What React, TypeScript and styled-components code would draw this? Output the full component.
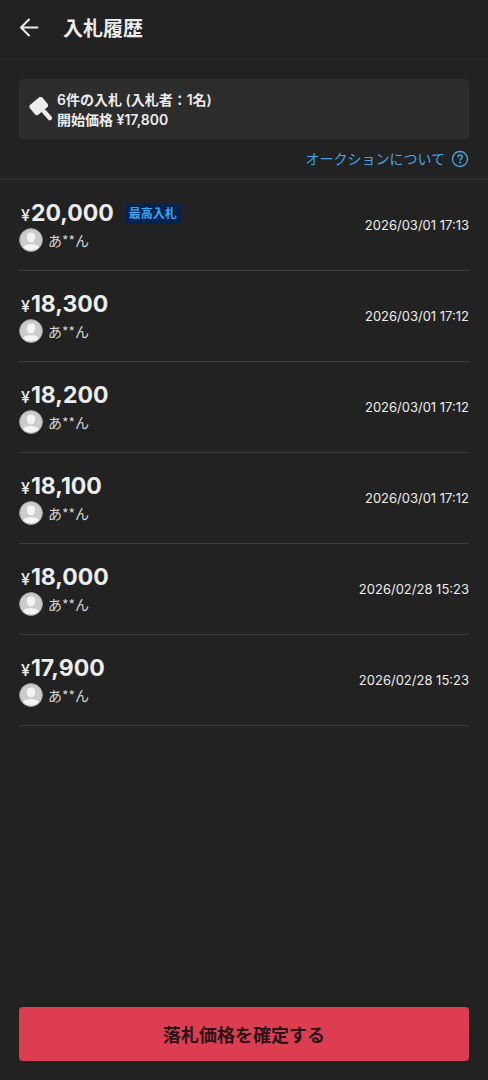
import React from 'react';
import styled, { createGlobalStyle } from 'styled-components';

const GlobalStyle = createGlobalStyle`
  *, *::before, *::after { box-sizing: border-box; }
  body {
    margin: 0;
    background: #222222;
    color: #ececec;
    font-family: Inter, "Noto Sans CJK JP", sans-serif;
  }
`;

const Page = styled.div`
  min-height: 100vh;
  display: flex;
  flex-direction: column;
`;

const Header = styled.header`
  display: flex;
  align-items: center;
  gap: 24px;
  height: 60px;
  padding: 0 19px 4px;
  border-bottom: 1px solid #262626;
`;

const BackButton = styled.button`
  display: flex;
  padding: 0;
  border: 0;
  background: none;
  color: inherit;
  cursor: pointer;
`;

const Title = styled.h1`
  margin: 0;
  padding-top: 2px;
  font-size: 20px;
  line-height: 28px;
  font-weight: 700;
`;

const Intro = styled.section`
  display: flex;
  flex-direction: column;
  padding: 19px 19px 9px;
  border-bottom: 2px solid #2b2b2b;
`;

const Summary = styled.div`
  display: flex;
  align-items: center;
  gap: 4px;
  min-height: 60px;
  padding: 8px 10px;
  border-radius: 4px;
  background: #2d2d2d;
`;

const SummaryText = styled.p`
  margin: 0;
  padding-top: 2px;
  font-size: 14px;
  line-height: 20px;
  font-weight: 600;
`;

const HelpLink = styled.a`
  display: flex;
  align-items: center;
  align-self: flex-end;
  gap: 6px;
  margin-top: 10px;
  color: #43a5e8;
  font-size: 14px;
  line-height: 20px;
  text-decoration: none;
`;

const BidList = styled.ul`
  margin: 0;
  padding: 0 19px;
  list-style: none;
`;

const BidRow = styled.li`
  display: flex;
  align-items: center;
  justify-content: space-between;
  height: 91px;
  border-bottom: 1px solid #3c3c3c;
`;

const BidInfo = styled.div`
  padding-top: 4px;
`;

const PriceLine = styled.div`
  display: flex;
  align-items: center;
  gap: 11px;
  height: 26px;
  padding-left: 2px;
`;

const Price = styled.span`
  font-size: 23px;
  line-height: 26px;
  font-weight: 700;
`;

const Yen = styled.span`
  margin-right: 1px;
  font-size: 16px;
  font-weight: 500;
`;

const Badge = styled.span`
  padding: 0 4px;
  border-radius: 2px;
  background: #04234f;
  color: #3aa5f2;
  font-size: 12px;
  line-height: 20px;
  font-weight: 700;
`;

const Bidder = styled.div`
  display: flex;
  align-items: center;
  gap: 5px;
  height: 26px;
  color: #d6d6d6;
  font-family: "Noto Sans CJK JP", sans-serif;
  font-size: 14px;
  line-height: 20px;
`;

const BidTime = styled.time`
  font-size: 13px;
  line-height: 20px;
`;

const Footer = styled.footer`
  display: flex;
  margin-top: auto;
  padding: 19px;
`;

const ConfirmButton = styled.button`
  flex: 1;
  height: 54px;
  padding: 4px 16px 0;
  border: 0;
  border-radius: 4px;
  background: #dc3d50;
  color: #2a1418;
  font: 700 18px/26px Inter, "Noto Sans CJK JP", sans-serif;
  cursor: pointer;
`;

const BackIcon = () => (
  <svg width="20" height="20" viewBox="0 0 20 20" fill="none" stroke="currentColor" strokeWidth="2" strokeLinecap="round" strokeLinejoin="round" aria-hidden="true">
    <path d="M18.5 9.500H2.500M10 1.500 2 9.500l8 8" />
  </svg>
);

const GavelIcon = () => (
  <svg width="24" height="24" viewBox="0 0 24 24" fill="#ececec" aria-hidden="true">
    <rect x="1.500" y="2.500" width="16.500" height="13" rx="3" transform="rotate(-40 9.750 9)" />
    <path d="M15 14.500 20.800 21" stroke="#ececec" strokeWidth="4.500" strokeLinecap="round" />
  </svg>
);

const HelpIcon = () => (
  <svg width="18" height="18" viewBox="0 0 18 18" fill="none" stroke="currentColor" aria-hidden="true">
    <circle cx="9" cy="9" r="7.5" strokeWidth="1.3" />
    <path d="M6.9 7.2c0-1.3.9-2.1 2.1-2.1s2.1.8 2.1 1.9c0 1.5-2 1.7-2 3.4" strokeWidth="1.5" />
    <circle cx="9.1" cy="12.4" r="1" fill="currentColor" stroke="none" />
  </svg>
);

const Avatar = () => (
  <svg width="24" height="24" viewBox="0 0 24 24" aria-hidden="true">
    <clipPath id="avatar-clip">
      <circle cx="12" cy="12" r="11" />
    </clipPath>
    <circle cx="12" cy="12" r="11.5" fill="#cccccc" />
    <g fill="#f4f4f4" clipPath="url(#avatar-clip)">
      <path d="M12 4.500c2.700 0 4.200 1.800 4.200 4.500S14.500 14.500 12 14.500 7.800 11.700 7.800 9 9.300 4.500 12 4.500Z" />
      <ellipse cx="12" cy="21.500" rx="9" ry="5.500" />
    </g>
    <circle cx="12" cy="12" r="11.300" fill="none" stroke="#a4a4a4" />
  </svg>
);

interface Bid {
  price: string;
  time: string;
  highest?: boolean;
}

const bids: Bid[] = [
  { price: '20,000', time: '2026/03/01 17:13', highest: true },
  { price: '18,300', time: '2026/03/01 17:12' },
  { price: '18,200', time: '2026/03/01 17:12' },
  { price: '18,100', time: '2026/03/01 17:12' },
  { price: '18,000', time: '2026/02/28 15:23' },
  { price: '17,900', time: '2026/02/28 15:23' },
];

export default function App() {
  return (
    <Page lang="ja">
      <GlobalStyle />
      <Header>
        <BackButton type="button" aria-label="戻る">
          <BackIcon />
        </BackButton>
        <Title>入札履歴</Title>
      </Header>
      <main>
        <Intro>
          <Summary>
            <GavelIcon />
            <SummaryText>
              6件の入札 (入札者：1名)
              <br />
              開始価格 ¥17,800
            </SummaryText>
          </Summary>
          <HelpLink href="#about">
            オークションについて
            <HelpIcon />
          </HelpLink>
        </Intro>
        <BidList>
          {bids.map((bid) => (
            <BidRow key={bid.price}>
              <BidInfo>
                <PriceLine>
                  <Price>
                    <Yen>¥</Yen>
                    {bid.price}
                  </Price>
                  {bid.highest && <Badge>最高入札</Badge>}
                </PriceLine>
                <Bidder>
                  <Avatar />
                  あ**ん
                </Bidder>
              </BidInfo>
              <BidTime>{bid.time}</BidTime>
            </BidRow>
          ))}
        </BidList>
      </main>
      <Footer>
        <ConfirmButton type="button">落札価格を確定する</ConfirmButton>
      </Footer>
    </Page>
  );
}
